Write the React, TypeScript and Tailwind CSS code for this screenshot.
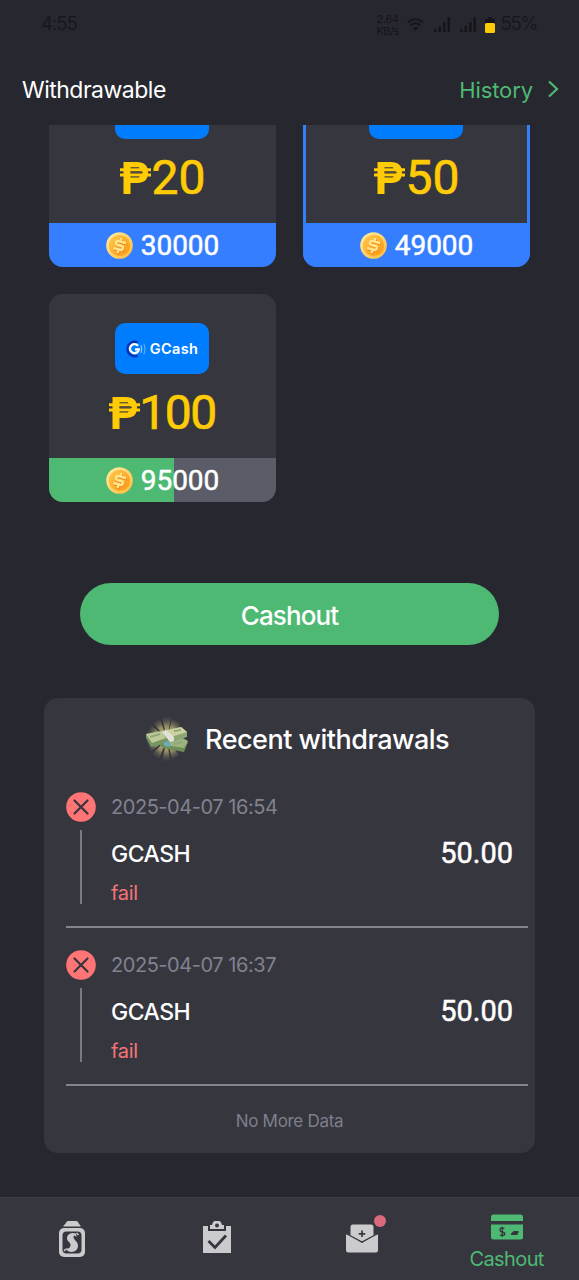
import clsx from "clsx";

interface ICard {
  amount: string;
  coins: string;
  selected?: boolean;
  progress: number;
  // only the lower part of the card is inside the scroll area
  scrolled?: boolean;
}

interface IRecord {
  time: string;
  method: string;
  amount: string;
  status: string;
}

const cards: ICard[] = [
  { amount: "20", coins: "30000", progress: 100, scrolled: true },
  { amount: "50", coins: "49000", progress: 100, scrolled: true, selected: true },
  { amount: "100", coins: "95000", progress: 55 },
];

const records: IRecord[] = [
  { time: "2025-04-07 16:54", method: "GCASH", amount: "50.00", status: "fail" },
  { time: "2025-04-07 16:37", method: "GCASH", amount: "50.00", status: "fail" },
];

function Signal() {
  return (
    <svg width="18" height="18" viewBox="0 0 18 18" fill="#15151b">
      <rect x="1" y="13" width="2.5" height="3" />
      <rect x="5.5" y="10" width="2.5" height="6" />
      <rect x="10" y="6" width="2.5" height="10" />
      <rect x="14.5" y="1" width="2.5" height="15" />
    </svg>
  );
}

function StatusBar() {
  return (
    <div className="flex h-12 items-center pl-[41px] pr-[42px] pt-[1px] font-['Inter',sans-serif] text-[#15151b]">
      <span className="text-[19px] font-light tracking-[-1px]">4:55</span>
      <div className="ml-auto flex items-center">
        <div className="mr-[8px] text-[11px] leading-[12px] tracking-[-0.4px]">
          <div>2.64</div>
          <div className="tracking-[-0.6px]">KB/s</div>
        </div>
        <svg width="17" height="15" viewBox="0 0 17 15" fill="none" stroke="#15151b" strokeWidth="1.8" className="mr-[9px]">
          <path d="M1 5.2Q8.5-1 16 5.2M3.6 8.4Q8.5 4.2 13.4 8.4" />
          <path d="M8.5 14L5.8 11Q8.5 8.8 11.2 11Z" fill="#15151b" stroke="none" />
        </svg>
        <Signal />
        <span className="w-[8px]" />
        <Signal />
        <svg width="10" height="17" viewBox="0 0 10 17" className="ml-[8px] mr-[6px]">
          <path d="M3 1h4v2h3v4H0V3h3Z" fill="#15151b" />
          <rect y="7" width="10" height="10" rx="1.5" fill="#fccb06" />
        </svg>
        <span className="text-[19px] font-light tracking-[-1.3px]">55%</span>
      </div>
    </div>
  );
}

function Coin() {
  return (
    <svg width="27" height="27" viewBox="0 0 27 27" className="mb-[2px]">
      <defs>
        <linearGradient id="coinFace" x1="0" y1="0" x2="1" y2="1">
          <stop offset="0" stopColor="#ffc94f" />
          <stop offset="1" stopColor="#fb9713" />
        </linearGradient>
        <linearGradient id="coinRim" x1="0" y1="0" x2="1" y2="1">
          <stop offset="0" stopColor="#fff0a8" />
          <stop offset="1" stopColor="#ffb937" />
        </linearGradient>
      </defs>
      <circle cx="13.5" cy="13.5" r="13.3" fill="url(#coinRim)" />
      <circle cx="13.5" cy="13.5" r="10.6" fill="url(#coinFace)" />
      <g transform="rotate(14 13.5 13.5)" fill="none" strokeLinecap="square">
        <path d="M18.2 9.5h-6.7q-2 0-2 2t2 2h4q2 0 2 2t-2 2H9.3M13.5 7v2.5M13.5 17.5V20" stroke="#f08c1a" strokeWidth="2.6" transform="translate(.8 .9)" />
        <path d="M18.2 9.5h-6.7q-2 0-2 2t2 2h4q2 0 2 2t-2 2H9.3M13.5 7v2.5M13.5 17.5V20" stroke="#ffe68c" strokeWidth="2.4" />
      </g>
    </svg>
  );
}

function GCashLogo() {
  return (
    <div className="mr-px flex h-[51px] w-[94px] items-center justify-center gap-[4px] rounded-[10px] bg-[#007dfe]">
      <svg width="20" height="18" viewBox="0 0 20 18" fill="none">
        <path d="M11.6 2.4A7.2 7.2 0 1 0 11.6 15.6" stroke="#0833b8" strokeWidth="2.4" />
        <path d="M12 5.9A4.5 4.5 0 1 0 12.9 9.4H9" stroke="#fff" strokeWidth="2.3" />
        <path d="M15 5.3Q16.6 9 15 12.7" stroke="#8fc8ff" strokeWidth="1.2" />
        <path d="M17.8 3.8Q20.2 9 17.8 14.2" stroke="#58aaff" strokeWidth="1.2" />
      </svg>
      <span className="font-['Inter',sans-serif] text-[14.5px] font-semibold tracking-[0.4px] text-white">GCash</span>
    </div>
  );
}

function CashCard({ item }: { item: ICard }) {
  const full = item.progress >= 100;
  return (
    <div
      className={clsx(
        "flex w-[227px] flex-col overflow-hidden",
        item.scrolled ? "h-[142px] rounded-b-[14px]" : "h-[208px] rounded-[14px]",
        item.selected ? "bg-[#357eff]" : "bg-[#36363f]"
      )}
    >
      <div
        className={clsx(
          "flex flex-col items-center bg-[#36363f]",
          item.scrolled ? "h-[98px]" : "h-[164px] pt-[29px]",
          item.selected && "mx-[3px]"
        )}
      >
        {item.scrolled ? (
          <div className="mr-px h-[14px] w-[94px] rounded-b-[10px] bg-[#007dfe]" />
        ) : (
          <GCashLogo />
        )}
        <div className="mt-[12px] flex h-[54px] items-center font-['Roboto',sans-serif] text-[48px] leading-[54px] text-[#fecb05]">
          <svg width="31" height="32" viewBox="0 0 31 32" fill="none" stroke="#fecb05">
            <path d="M7 0V32" strokeWidth="7" />
            <path d="M7 3H17Q25 3 25 10.5T17 18H7" strokeWidth="6" />
            <path d="M0 7.7H31M0 13H31" strokeWidth="3" />
            <path d="M10.5 10.4H23M10.5 5.6H19M10.5 15.1H19" stroke="#5b5137" strokeWidth="1" />
          </svg>
          {item.amount.startsWith("1") ? (
            <span className="-ml-[1px] tracking-[-1.4px] [-webkit-text-stroke:0.7px_#fecb05]">{item.amount}</span>
          ) : (
            <span className="ml-[1px] [-webkit-text-stroke:0.7px_#fecb05]">{item.amount}</span>
          )}
        </div>
      </div>
      <div className={clsx("relative h-[44px]", full ? "bg-[#357eff]" : "bg-[#5a5c68]")}>
        {!full && <div className="h-full bg-[#4eb973]" style={{ width: item.progress + "%" }} />}
        <div className="absolute inset-0 flex items-center justify-center gap-[8px] pt-[2px] font-['Roboto',sans-serif] text-[28px] text-white [-webkit-text-stroke:0.5px_#fff]">
          <Coin />
          <span>{item.coins}</span>
        </div>
      </div>
    </div>
  );
}

function MoneyIcon() {
  return (
    <svg width="44" height="44" viewBox="0 0 44 44">
      <defs>
        <radialGradient id="glow">
          <stop offset="0" stopColor="#f5eba0" />
          <stop offset="0.6" stopColor="#a59d6c" stopOpacity="0.8" />
          <stop offset="1" stopColor="#5b594d" stopOpacity="0.1" />
        </radialGradient>
      </defs>
      <path d="M22 22L17 0H26ZM22 22L27 2L36 7ZM22 22L38 9L43 20ZM22 22L43 25L38 37ZM22 22L34 38L27 42ZM22 22L25 44H17ZM22 22L14 42L7 37ZM22 22L5 35L1 24ZM22 22L2 18L6 8ZM22 22L8 6L15 2Z" fill="url(#glow)" />
      <path d="M14 27L35 21L43 25L39 35L18 31Z" fill="#6c8f57" />
      <path d="M18 25L36 20L43 24L39 31L20 28Z" fill="#9db481" />
      <path d="M1 17L17 14L25 21L24 26L6 30L1 21Z" fill="#759563" />
      <path d="M1 17L17 14L24 20L7 26Z" fill="#bdca98" />
      <path d="M18 14L36 10L42 15V20L27 25L20 20Z" fill="#8da672" />
      <path d="M18 14L36 10L42 15L26 20Z" fill="#ccd29f" />
      <path d="M17 15L21 13L29 20V24L25 25Z" fill="#e1e0d9" />
      <path d="M19 25L24 24L26 27L24 30L19 29Z" fill="#6faab4" />
      <path d="M5 20L15 17M29 14L36 13M29 27L37 25" stroke="#93a879" strokeWidth="2" />
    </svg>
  );
}

function RecordItem({ item }: { item: IRecord }) {
  return (
    <div className="ml-[22px] mr-[7px] flex h-[158px] border-b-2 border-[#85858f] font-['Inter',sans-serif]">
      <div className="flex w-[30px] flex-col items-center pt-[22px]">
        <svg width="30" height="30" viewBox="0 0 30 30">
          <circle cx="15" cy="15" r="14.8" fill="#ff7474" />
          <path d="M8.5 8.5L21.5 21.5M21.5 8.5L8.5 21.5" stroke="#36363f" strokeWidth="2.2" strokeLinecap="round" />
        </svg>
        <div className="mt-[8px] h-[74px] w-[2px] bg-[#797982]" />
      </div>
      <div className="ml-[15px] flex-1 pt-[22px]">
        <div className="h-[30px] text-[20px] leading-[30px] tracking-[-0.45px] text-[#81828f]">{item.time}</div>
        <div className="mt-[15px] flex h-[34px] items-center justify-between pr-[15px] text-white">
          <span className="text-[23px] font-medium tracking-[-0.5px]">{item.method}</span>
          <span className="font-['Roboto',sans-serif] text-[29px] [-webkit-text-stroke:0.5px_#fff]">{item.amount}</span>
        </div>
        <div className="mt-[8px] text-[20px] leading-[28px] tracking-[-0.3px] text-[#f77475]">{item.status}</div>
      </div>
    </div>
  );
}

function JarIcon() {
  return (
    <svg width="28" height="38" viewBox="0 0 28 38">
      <path d="M5.5 6.5V5.5Q7.5 4 8.5 2Q9 1 10.5 1H18Q19.5 1 20 2Q21 4 22.5 5.5V6.5Z" fill="#cbcbce" />
      <rect x="1" y="8" width="26" height="29" rx="5" fill="#cbcbce" />
      <rect x="4.5" y="11.5" width="19" height="22" rx="4" fill="#36363f" />
      <path d="M18 13.5Q13 12 10 15Q7.5 19 11 22Q13.5 24.5 12 27Q10.5 29.5 7.5 28Q9 32 14 32Q20 31 20 26Q20 22.500 17 20Q14.500 17.500 16 15.500Q17.500 15.500 18.500 17Z" fill="#cbcbce" />
      <path d="M18.500 13l2 2M8 29l-2 2" stroke="#cbcbce" strokeWidth="1.5" />
    </svg>
  );
}

function TaskIcon() {
  return (
    <svg width="28" height="33" viewBox="0 0 28 33">
      <path d="M0 5H5V10H23V5H28V32H0Z" fill="#cbcbce" />
      <path d="M7 8V4H9Q10 0 12 0H16Q18 0 19 4H21V8Z" fill="#cbcbce" />
      <circle cx="14" cy="4.5" r="2" fill="#36363f" />
      <path d="M5.5 20L12 26.500L23 14.500" fill="none" stroke="#36363f" strokeWidth="2.8" />
    </svg>
  );
}

function MailIcon() {
  return (
    <svg width="32" height="29" viewBox="0 0 32 29">
      <path d="M4.500 12V3Q4.500 .5 7 .5H25Q27.500 .5 27.500 3V12L16 18Z" fill="#cbcbce" />
      <path d="M0 10.500H3L16 19L29 10.500H32V26Q32 28.500 29.500 28.500H2.500Q0 28.500 0 26Z" fill="#cbcbce" />
      <path d="M1 10L16 18L31 10" fill="none" stroke="#36363f" strokeWidth="1.4" />
      <path d="M16 6.500V13M12.700 9.800H19.300" stroke="#36363f" strokeWidth="1.7" />
    </svg>
  );
}

function CardIcon() {
  return (
    <svg width="32" height="26" viewBox="0 0 32 26">
      <path d="M0 7V3Q0 .5 2.500 .5H29.500Q32 .5 32 3V7Z" fill="#4eb973" />
      <path d="M0 10.500H32V23Q32 25.500 29.500 25.500H2.500Q0 25.500 0 23Z" fill="#4eb973" />
      <path d="M13.500 14.500Q9 13 9 15.500T11.500 18Q14 18.500 13.800 20.500Q12.500 22.500 9 20.800M11.300 12.700V22.800" fill="none" stroke="#36363f" strokeWidth="1.3" />
      <path d="M21.500 18Q22 17 24 17H27.500V18.500Q27 21 25.500 21H20V19.500Z" fill="#36363f" />
    </svg>
  );
}

function App() {
  return (
    <div className="flex h-[1280px] w-[579px] flex-col overflow-hidden bg-[#27272f] font-['Inter',sans-serif]">
      <StatusBar />
      <div className="flex h-[77px] items-center justify-between pl-[22px] pr-[20px] pt-[7px]">
        <span className="text-[23px] tracking-[-0.5px] text-white">Withdrawable</span>
        <div className="flex items-center gap-[14px] text-[#4eb973]">
          <span className="text-[22px] tracking-[-0.1px]">History</span>
          <svg width="12" height="18" viewBox="0 0 12 18" fill="none" stroke="#4eb973" strokeWidth="2.2" className="mb-[2px]">
            <path d="M2 1.500L10 9L2 16.500" />
          </svg>
        </div>
      </div>

      <div className="h-[1072px]">
        <div className="grid grid-cols-[227px_227px] gap-[27px] pl-[49px]">
          {cards.map((c) => (
            <CashCard key={c.amount} item={c} />
          ))}
        </div>

        <button className="ml-[80px] mt-[81px] flex h-[62px] w-[419px] items-center justify-center rounded-full bg-[#4eb973] pt-[2px] text-[26px] font-medium tracking-[-0.9px] text-white">
          Cashout
        </button>

        <div className="ml-[44px] mt-[53px] h-[455px] w-[491px] rounded-[14px] bg-[#36363f]">
          <div className="flex h-[72px] items-center gap-[16px] pl-[101px] pt-[10px]">
            <MoneyIcon />
            <span className="pt-[2px] text-[27px] font-medium tracking-[-0.5px] text-white">Recent withdrawals</span>
          </div>
          {records.map((r) => (
            <RecordItem key={r.time} item={r} />
          ))}
          <div className="pt-[23px] text-center text-[17px] leading-[24px] tracking-[-0.3px] text-[#7e7f8b]">No More Data</div>
        </div>
      </div>

      <div className="grid h-[83px] grid-cols-4 justify-items-center border-t border-[#3f3f48] bg-[#36363f]">
        <div className="pt-[22px]">
          <JarIcon />
        </div>
        <div className="pt-[23px]">
          <TaskIcon />
        </div>
        <div className="relative pt-[26px]">
          <MailIcon />
          <span className="absolute -right-[8px] top-[17px] h-[12px] w-[12px] rounded-full bg-[#d9697c]" />
        </div>
        <div className="flex flex-col items-center pt-[16px] text-[#4eb973]">
          <CardIcon />
          <span className="mt-[5px] text-[20px] leading-[28px] tracking-[-0.6px]">Cashout</span>
        </div>
      </div>
    </div>
  );
}

export default App;
